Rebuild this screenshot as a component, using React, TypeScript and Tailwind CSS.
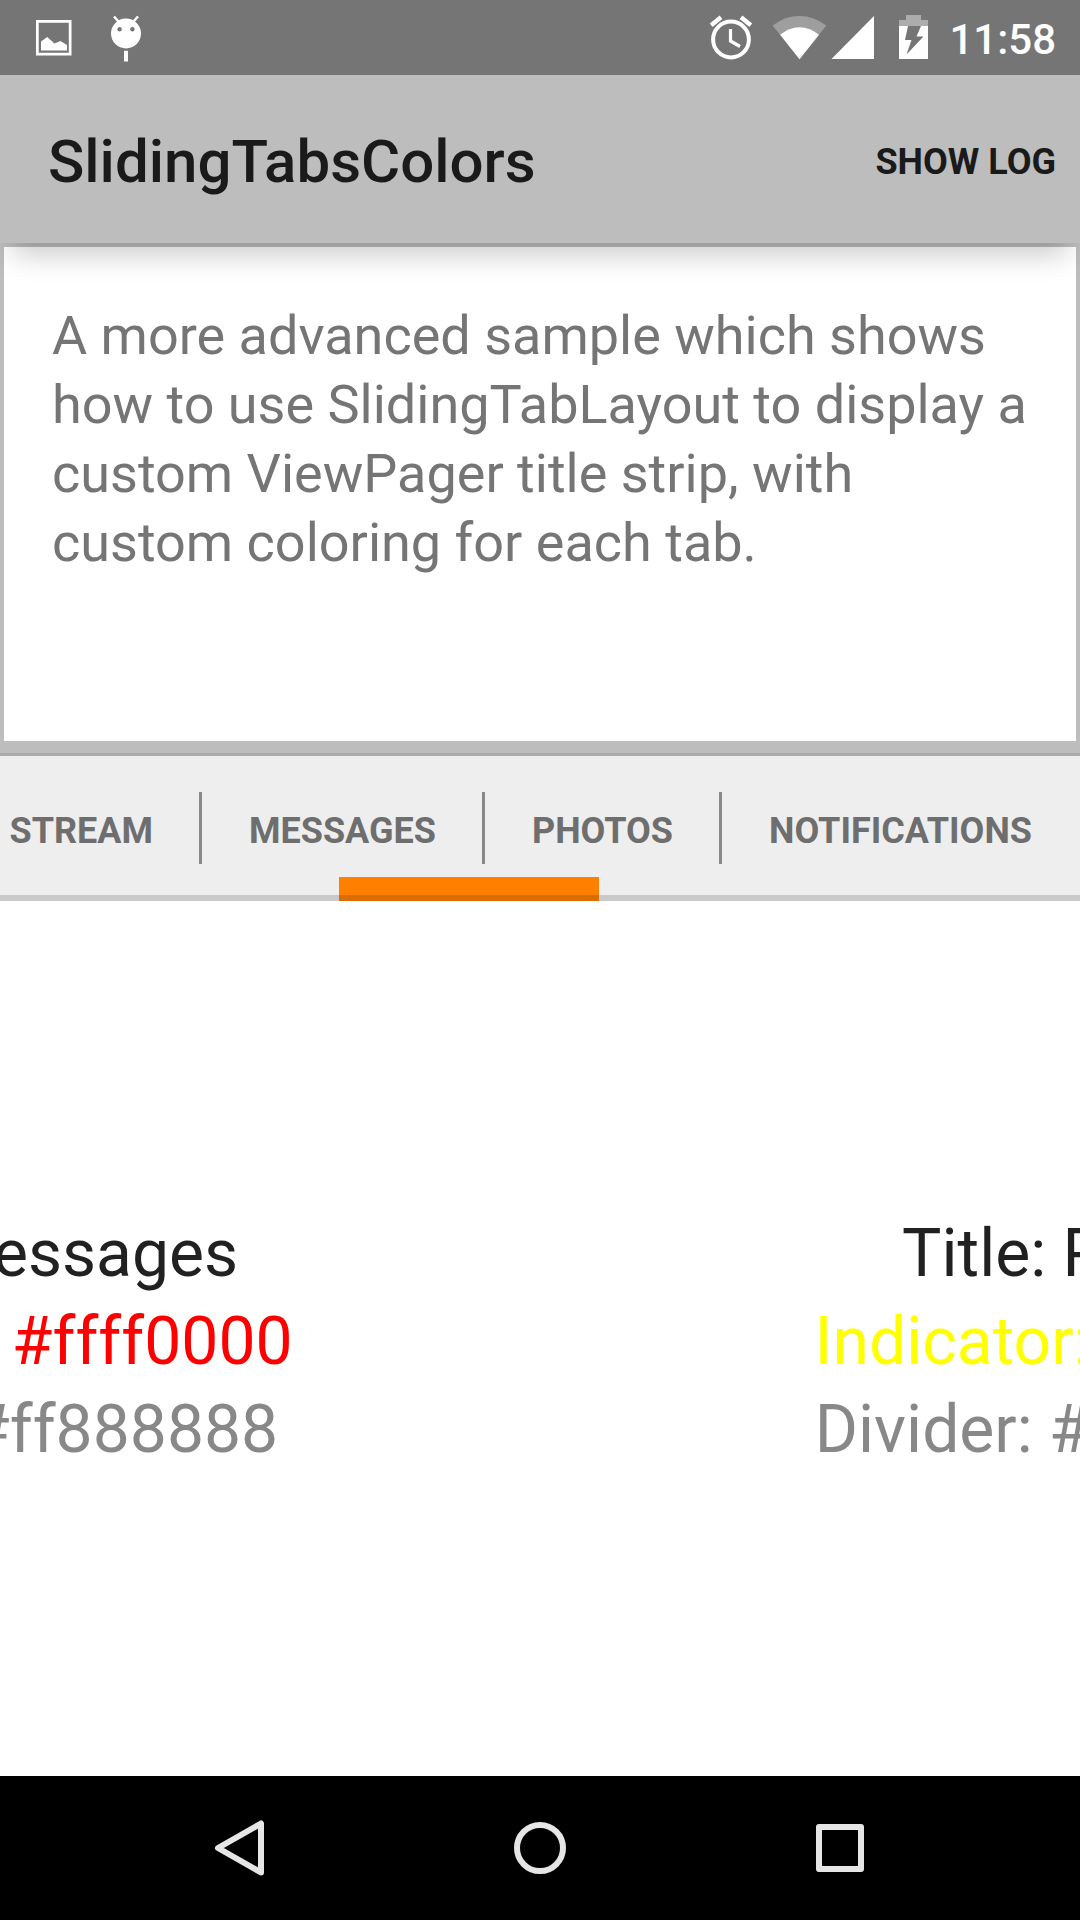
import React from "react";

const tabs = ["Stream", "Messages", "Photos", "Notifications"];

const pages = [
  { title: "Messages", indicator: "#ffff0000", divider: "#ff888888", tone: "text-[#ff0000]" },
  { title: "Photos", indicator: "#ffffff00", divider: "#ff888888", tone: "text-[#ffff00]" },
];

function StatusBar() {
  return (
    <div className="flex h-[75px] shrink-0 items-center bg-[#757575] pr-6 pl-9 text-white">
      <svg className="h-[75px] w-9" viewBox="0 0 36 75" fill="currentColor" aria-label="Screenshot saved">
        <path fillRule="evenodd" d="M0 20H35.5V55.5H0ZM2.7 22.7V52.8H32.8V22.7Z" />
        <path d="M5 41.500L11.200 37L18.500 43.500L24.500 41L31 45V50.500H5Z" />
      </svg>
      <svg className="ml-[39px] h-[75px] w-[30px]" viewBox="0 0 30 75" aria-label="USB debugging">
        <circle cx="15" cy="33.500" r="15" fill="currentColor" />
        <path d="M3 16.500L7.500 21.500M27 16.500L22.500 21.500" stroke="currentColor" strokeWidth="2.600" />
        <circle cx="8.600" cy="29.300" r="2.200" fill="#757575" />
        <circle cx="21.400" cy="29.300" r="2.200" fill="#757575" />
        <path d="M13 50.800H17V61.500H13Z" fill="currentColor" />
      </svg>
      <svg className="ml-auto h-[75px] w-11" viewBox="709 0 44 75" fill="none" stroke="currentColor" aria-label="Alarm set">
        <circle cx="731" cy="39.500" r="17.900" strokeWidth="4" />
        <path d="M730.500 29V41L740 46.500" strokeWidth="3.200" />
        <path d="M711.200 25.200L721 17.200M750.800 25.200L741 17.200" strokeWidth="4.400" />
      </svg>
      <svg className="ml-5 h-[75px] w-[54px]" viewBox="773 0 54 75" fill="currentColor" aria-label="Wi-Fi">
        <path opacity="0.3" d="M772.700 25.600Q785 16 799.500 16T826.300 25.600L799.500 59.300Z" />
        <path d="M780.200 34.800Q789 27.300 799.500 27.300T819 34.800L799.500 59.300Z" />
      </svg>
      <svg className="ml-1 h-[75px] w-11" viewBox="831 0 44 75" fill="currentColor" aria-label="Signal">
        <path d="M874 16V59H831.500Z" />
      </svg>
      <svg className="ml-6 h-[75px] w-[30px]" viewBox="899 0 30 75" fill="currentColor" aria-label="Battery charging">
        <path opacity="0.4" d="M899 20H906V15H921V20H928V26H899Z" />
        <path fillRule="evenodd" d="M899 26H928V59H899ZM908 26L905 40H911.500L906.500 54.500L923.500 36.500H916.500L921 26Z" />
      </svg>
      <time className="ml-5 pt-1 text-[42px] leading-[75px] font-medium">11:58</time>
    </div>
  );
}

function AppBar() {
  return (
    <header className="relative z-10 flex h-[168px] shrink-0 items-center justify-between bg-[#bdbdbd] pt-1.5 pr-6 pl-12 text-[#1a1a1a] shadow-[0_24px_26px_-12px_rgba(0,0,0,0.2)]">
      <h1 className="text-[60px] leading-[72px] font-medium">SlidingTabsColors</h1>
      <button type="button" className="text-[36px] leading-[48px] font-bold uppercase">
        Show log
      </button>
    </header>
  );
}

function TabStrip() {
  return (
    <div role="tablist" className="relative flex h-[145px] shrink-0 justify-end overflow-hidden bg-[#eeeeee]">
      {tabs.map((tab, i) => (
        <button
          key={tab}
          type="button"
          role="tab"
          aria-selected={tab === "Messages"}
          className="relative shrink-0 px-12 pt-1 text-[36px] leading-[48px] font-bold text-[#6e6e6e] uppercase"
        >
          {tab}
          {i < tabs.length - 1 && <span className="absolute top-9 -right-px h-[72px] w-[3px] bg-[#888888]" />}
        </button>
      ))}
      <span className="absolute bottom-0 left-[339px] h-6 w-[260px] bg-[#ff8000]" />
      <span className="absolute inset-x-0 bottom-0 h-1.5 bg-black/15" />
    </div>
  );
}

function NavigationBar() {
  const button = "flex w-[300px] items-center justify-center";
  return (
    <nav className="flex h-36 shrink-0 justify-center bg-black text-[#e6e6e6]">
      <button type="button" aria-label="Back" className={button}>
        <svg className="size-[60px]" viewBox="0 0 60 60" fill="none" stroke="currentColor" strokeWidth="6" strokeLinejoin="round">
          <path d="M51 5.500V54.500L8 30Z" />
        </svg>
      </button>
      <button type="button" aria-label="Home" className={button}>
        <svg className="size-[60px]" viewBox="0 0 60 60" fill="none" stroke="currentColor" strokeWidth="6">
          <circle cx="30" cy="30" r="23" />
        </svg>
      </button>
      <button type="button" aria-label="Overview" className={button}>
        <svg className="size-[60px]" viewBox="0 0 60 60" fill="none" stroke="currentColor" strokeWidth="6" strokeLinejoin="round">
          <path d="M9 9H51V51H9Z" />
        </svg>
      </button>
    </nav>
  );
}

export default function App() {
  return (
    <div className="flex min-h-screen flex-col overflow-hidden bg-white font-['Roboto',sans-serif]">
      <StatusBar />
      <AppBar />
      <section className="h-[513px] shrink-0 border-b-3 border-[#aaaaaa]">
        <div className="h-full border-x-4 border-t-4 border-b-12 border-[#bdbdbd] bg-white px-12 pt-[54px]">
          <p className="text-[54px] leading-[69px] text-[#757575]">
            A more advanced sample which shows how to use SlidingTabLayout to display a custom ViewPager title strip, with
            custom coloring for each tab.
          </p>
        </div>
      </section>
      <TabStrip />
      <main className="flex grow overflow-hidden">
        {pages.map((page) => (
          <article
            key={page.title}
            className="flex w-full shrink-0 -translate-x-[49.4%] flex-col items-center justify-center pt-1.5 text-[66px] leading-[88px] whitespace-nowrap"
          >
            <h2 className="text-[#212121]">Title: {page.title}</h2>
            <p className={page.tone}>Indicator: {page.indicator}</p>
            <p className="text-[#888888]">Divider: {page.divider}</p>
          </article>
        ))}
      </main>
      <NavigationBar />
    </div>
  );
}
